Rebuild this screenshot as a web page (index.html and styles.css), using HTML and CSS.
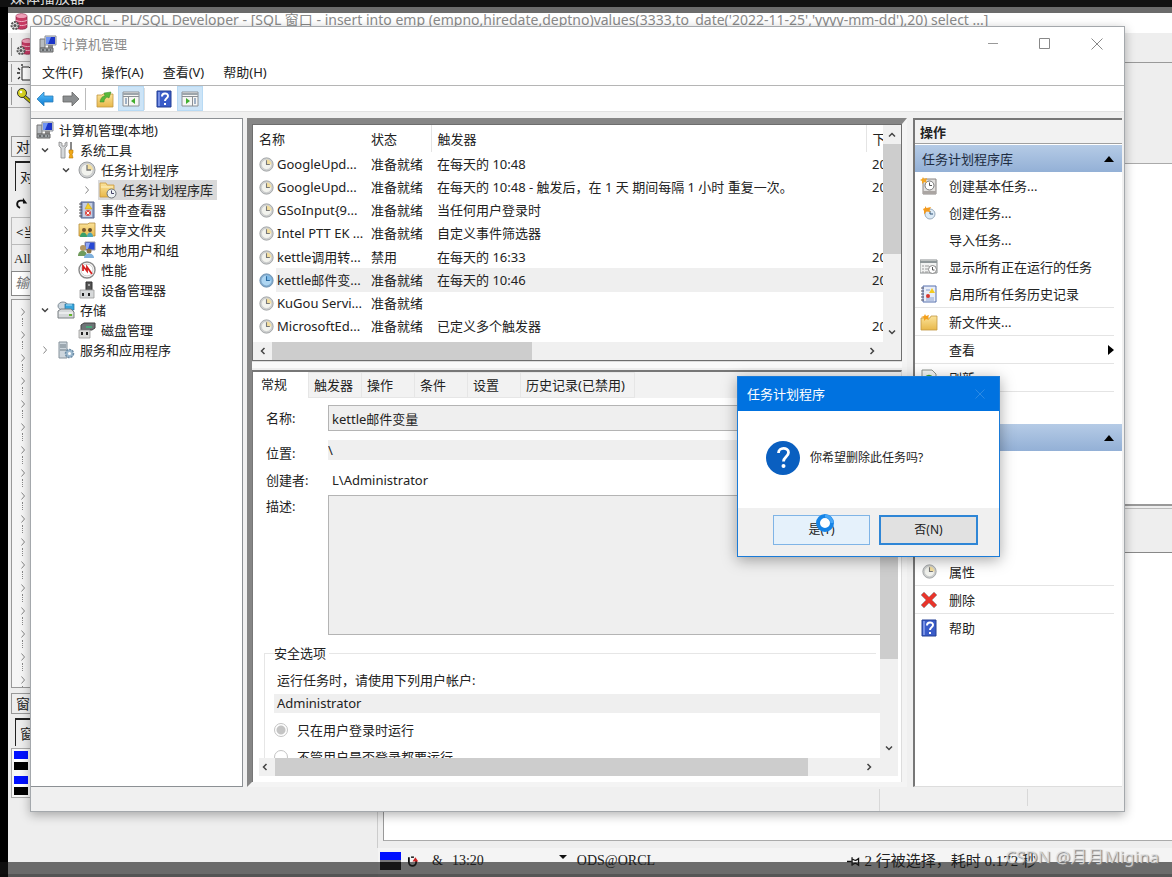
FILE: index.html
```html
<!DOCTYPE html>
<html lang="zh-CN">
<head>
<meta charset="utf-8">
<title>计算机管理</title>
<link rel="stylesheet" href="styles.css">
</head>
<body>
<svg class="defs" aria-hidden="true">
  <defs>
    <linearGradient id="gBlue" x1="0" y1="0" x2="0" y2="1"><stop offset="0" stop-color="#5cc4ff"/><stop offset="1" stop-color="#0a78d0"/></linearGradient>
    <linearGradient id="gGold" x1="0" y1="0" x2="0" y2="1"><stop offset="0" stop-color="#fbe39a"/><stop offset="1" stop-color="#e8b84a"/></linearGradient>
    <symbol id="i-pc" viewBox="0 0 18 18"><path d="M1 4h5v9H1z" fill="#b8bcc0" stroke="#777"/><path d="M6 1h11v9H6z" fill="#d8dce0" stroke="#8a8f98"/><path d="M7 2h9v7H7z" fill="#1b35c8"/><path d="M7 2h5l-3 7H7z" fill="#6f93f4"/><path d="M9 10h5v3H9z" fill="#888"/><path d="M1 13h13v4H1z" fill="#9aa0a4" stroke="#666"/><path d="M3 15h2m2 0h2m2 0h1" stroke="#333"/></symbol>
    <symbol id="i-tools" viewBox="0 0 18 18"><path d="M2 1v4l2 2v10h4V7l2-2V1L8 2v3H5V2z" fill="#d5d8da" stroke="#888" stroke-width=".8"/><path d="M13 1h2v8h-2z" fill="#888"/><path d="M12 9h4v3l-1 1 1 4h-4l1-4-1-1z" fill="#f0a818" stroke="#b87808" stroke-width=".6"/></symbol>
    <symbol id="i-clock" viewBox="0 0 18 18"><circle cx="9" cy="9" r="8" fill="#cfd1d2" stroke="#9a9d9f"/><circle cx="9" cy="9" r="6" fill="#f2f3ee" stroke="#bbb" stroke-width=".5"/><path d="M9 3a6 6 0 0 1 6 6H9z" fill="#f3dfa0"/><path d="M9 4v5h4" fill="none" stroke="#777" stroke-width="1.300"/></symbol>
    <symbol id="i-clockblue" viewBox="0 0 18 18"><circle cx="9" cy="9" r="8" fill="#7fa9cc" stroke="#6d90b0"/><circle cx="9" cy="9" r="6" fill="#aed6f2"/><path d="M9 3a6 6 0 0 1 6 6H9z" fill="#7fbbe8"/><path d="M9 4v5h4" fill="none" stroke="#2a6aa0" stroke-width="1.300"/></symbol>
    <symbol id="i-foldclock" viewBox="0 0 18 18"><path d="M1 2h6l1 2h7v12H1z" fill="url(#gGold)" stroke="#c9983a" stroke-width=".8"/><path d="M2 6h12" stroke="#fff3c4"/><circle cx="12.500" cy="12.500" r="4.500" fill="#eef2f4" stroke="#6b7277"/><path d="M12.500 9.500v3h2.500" fill="none" stroke="#446"/></symbol>
    <symbol id="i-event" viewBox="0 0 18 18"><path d="M3 1h13v16H3z" fill="#8f9fc4" stroke="#54658f"/><path d="M5 2h9v14H5z" fill="#c5cee2"/><path d="M1 3h3m-3 3h3m-3 3h3m-3 3h3m-3 3h3" stroke="#555"/><path d="M10 2l4 6H7z" fill="#f4cf2a" stroke="#c69a10" stroke-width=".5"/><circle cx="10" cy="12" r="3" fill="#dd4a44"/><path d="M8.500 10.500l3 3m0-3l-3 3" stroke="#fff"/></symbol>
    <symbol id="i-share" viewBox="0 0 18 18"><path d="M1 3h9l1-1h6v13H1z" fill="url(#gGold)" stroke="#b48b35" stroke-width=".8"/><circle cx="6" cy="9" r="2" fill="#7a5a30"/><circle cx="12" cy="9" r="2" fill="#5f4a2c"/><path d="M2 16c0-6 7-6 7 0z" fill="#38a06c"/><path d="M9 16c0-6 6-6 6 0z" fill="#4ba7b8"/></symbol>
    <symbol id="i-users" viewBox="0 0 18 18"><path d="M7 1h10v8H7z" fill="#2748d4" stroke="#99a"/><path d="M8 2h4l-2 6H8z" fill="#8fa8f6"/><circle cx="5" cy="7" r="3" fill="#b49762"/><path d="M0 15c0-7 9-7 9 0z" fill="#6f9a5c"/><circle cx="11" cy="10" r="2.500" fill="#8d7248"/><path d="M6 17c0-6 10-6 10 0z" fill="#7fb0dc"/></symbol>
    <symbol id="i-perf" viewBox="0 0 18 18"><circle cx="9" cy="9" r="8" fill="#fff" stroke="#888" stroke-width="1.400"/><circle cx="9" cy="9" r="6" fill="none" stroke="#ccc"/><path d="M5 10V5l4 5V6l5 7" fill="none" stroke="#d42020" stroke-width="1.800"/></symbol>
    <symbol id="i-device" viewBox="0 0 18 18"><path d="M8 1h6v9H8z" fill="#555" stroke="#333"/><path d="M10 3h2v2h-2z" fill="#aaa"/><path d="M2 9h14v8H2z" fill="#d7d9da" stroke="#999" stroke-width=".8"/><path d="M5 12v3m6-3v3" stroke="#222" stroke-width="2"/></symbol>
    <symbol id="i-storage" viewBox="0 0 18 18"><ellipse cx="6" cy="5" rx="5" ry="4" fill="#ccd6de" stroke="#7d8a94"/><path d="M8 3h9v6H8z" fill="#36a5dc" stroke="#26709c" stroke-width=".7"/><path d="M9 4h6" stroke="#b5e4fa"/><path d="M1 10l3-2h10l3 3v6H1z" fill="#d5d8da" stroke="#7b8084"/><path d="M2 12h14" stroke="#fff"/><path d="M12 14h3" stroke="#63b52c" stroke-width="2"/></symbol>
    <symbol id="i-disk" viewBox="0 0 18 18"><path d="M3 4l3-2h11v5l-3 2H3z" fill="#6e7477" stroke="#444"/><path d="M8 6h6" stroke="#3cb878" stroke-width="1.500"/><path d="M1 9h11v8H1z" fill="#dcdcda" stroke="#999" stroke-width=".8"/><path d="M4 11v3m5-3v3" stroke="#222" stroke-width="2"/></symbol>
    <symbol id="i-server" viewBox="0 0 18 18"><path d="M2 1h8v16H2z" fill="#cdd6dd" stroke="#87939c"/><path d="M3 4h6M3 6h6M3 9h6" stroke="#6d7a84"/><circle cx="12.500" cy="12.500" r="4" fill="#9cb9cf" stroke="#6d8ca6" stroke-width="1.500" stroke-dasharray="2 1"/><circle cx="12.500" cy="12.500" r="1.500" fill="#fff"/></symbol>
    <symbol id="i-back" viewBox="0 0 18 18"><path d="M1 9l7-7v4h9v6H8v4z" fill="url(#gBlue)" stroke="#2f7fb8" stroke-width=".8"/></symbol>
    <symbol id="i-fwd" viewBox="0 0 18 18"><path d="M17 9l-7-7v4H1v6h9v4z" fill="#8c8f91" stroke="#666" stroke-width=".8"/></symbol>
    <symbol id="i-up" viewBox="0 0 18 18"><path d="M1 5h5l1-1h10v13H1z" fill="url(#gGold)" stroke="#c29743" stroke-width=".8"/><path d="M4 12c1-5 3-6 5-6L8 3l7-1-2 6-2-1c-2 1-3 3-3 5z" fill="#58b83a" stroke="#3b8a26" stroke-width=".5"/></symbol>
    <symbol id="i-paneL" viewBox="0 0 18 18"><path d="M1 2h16v14H1z" fill="#f5f5f3" stroke="#8b9096"/><path d="M1 3h16v2H1z" fill="#9da5ab"/><path d="M1 6.500h16M6.500 7v9" stroke="#8b9096"/><path d="M3 9h2m-2 2h2m-2 2h2" stroke="#4a6c98"/><path d="M13 8v6l-4-3z" fill="#3fae2e"/></symbol>
    <symbol id="i-paneR" viewBox="0 0 18 18"><path d="M1 2h16v14H1z" fill="#f5f5f3" stroke="#8b9096"/><path d="M1 3h16v2H1z" fill="#9da5ab"/><path d="M1 6.500h16M11.500 7v9" stroke="#8b9096"/><path d="M13 9h2m-2 2h2m-2 2h2" stroke="#4a6c98"/><path d="M5 8v6l4-3z" fill="#3fae2e"/></symbol>
    <symbol id="i-help" viewBox="0 0 18 18"><path d="M2 1h14v16H2z" fill="#3a5cc8" stroke="#233f94"/><path d="M3 2h2v14H3z" fill="#7690e4"/><path d="M7 6.500c0-4 6-4 6-.5 0 2.500-3 2-3 5" fill="none" stroke="#fff" stroke-width="2"/><path d="M9 13h2v2H9z" fill="#fff"/></symbol>
    <symbol id="i-newbasic" viewBox="0 0 18 18"><path d="M3 2h13v15H3z" fill="#e2e0de" stroke="#8a8583"/><path d="M3 14h13v3H3z" fill="#aaa5a2"/><circle cx="9.500" cy="8.500" r="4.500" fill="#fff" stroke="#777"/><path d="M9.500 5.500v3h2.500" fill="none" stroke="#555"/><path d="M3 0l1 2 3-1-1 3 1 2-3-1-2 2V4L0 3l2-1z" fill="#f5a623"/></symbol>
    <symbol id="i-newtask" viewBox="0 0 18 18"><circle cx="10" cy="10" r="5" fill="#dceaf6" stroke="#9ab"/><path d="M10 7v3h3" fill="none" stroke="#357"/><path d="M5 2l1.500 2L11 3 9.500 6l1 2-4-.5-2.500 3V7L3 5l2-1z" fill="#f39a1e"/></symbol>
    <symbol id="i-running" viewBox="0 0 18 18"><path d="M0 2h17v13H0z" fill="#f1f2f1" stroke="#8a8f90"/><path d="M0 3h17v2H0z" fill="#8f9799"/><path d="M2 8h2m1 0h4m-7 3h2m1 0h3m-6 3h2m1 0h3" stroke="#999"/><circle cx="12.500" cy="11.500" r="4" fill="#fff" stroke="#888"/><path d="M12.500 9v3h2" fill="none" stroke="#555"/></symbol>
    <symbol id="i-history" viewBox="0 0 18 18"><path d="M3 1h13v16H3z" fill="#e8edf8" stroke="#5671ae"/><path d="M1 3h3m-3 3h3m-3 3h3m-3 3h3m-3 3h3" stroke="#556"/><path d="M6 5h4m-4 8h8m-8 2h8" stroke="#8aa0d0"/><path d="M12 3l3 5H9z" fill="#f3cb20"/><circle cx="8" cy="11" r="2" fill="#d8362e"/></symbol>
    <symbol id="i-newfold" viewBox="0 0 18 18"><path d="M1 5h9l1-2h6v14H1z" fill="url(#gGold)" stroke="#c29743" stroke-width=".8"/><path d="M5 1l1 2 3-1-1 3 1 2-3-1-2 2V5L1 4l3-1z" fill="#f5a01a"/></symbol>
    <symbol id="i-refresh" viewBox="0 0 18 18"><path d="M2 1h10l4 4v12H2z" fill="#f3f5f3" stroke="#8c928c"/><path d="M5 11a4 4 0 1 1 4 4" fill="none" stroke="#3fa535" stroke-width="2.500"/></symbol>
    <symbol id="i-delete" viewBox="0 0 18 18"><path d="M4 1l5 5 5-5 3 3-5 5 5 5-3 3-5-5-5 5-3-3 5-5-5-5z" fill="#e8352c" stroke="#a9a0a0" stroke-width=".8"/></symbol>
    <symbol id="i-db" viewBox="0 0 18 18"><path d="M6 3c0-3 11-3 11 0v11c0 3-11 3-11 0z" fill="#c83a64" stroke="#7e2440" stroke-width=".7"/><ellipse cx="11.500" cy="3" rx="5.500" ry="2" fill="#eda0b8"/><path d="M6 7c2 2 9 2 11 0M6 11c2 2 9 2 11 0" fill="none" stroke="#f0b4c6"/><circle cx="5" cy="12.500" r="3.500" fill="#ddd" stroke="#555" stroke-width="2" stroke-dasharray="2 1"/><circle cx="5" cy="12.500" r="1.500" fill="#555"/></symbol>
    <symbol id="i-new" viewBox="0 0 18 18"><path d="M6 3h7l4 4v9H6z" fill="#fff" stroke="#222"/><path d="M1 9h3M2 4l2 2M6 0v2M2 15l2-2" stroke="#222" stroke-width="1.300"/></symbol>
    <symbol id="i-key" viewBox="0 0 18 18"><path d="M9 8l8 7-2 2-8-7z" fill="#c8c400" stroke="#333"/><circle cx="6" cy="6" r="4.500" fill="#d8d422" stroke="#333"/><circle cx="5" cy="5" r="1.300" fill="#fff"/></symbol>
    <symbol id="i-redo" viewBox="0 0 18 18"><path d="M7 15C1 13 2 5 8 5h4" fill="none" stroke="#111" stroke-width="2.500"/><path d="M11 1v8h6z" fill="#111"/></symbol>
    <symbol id="i-spin" viewBox="0 0 18 18"><path d="M4 3v7a5 5 0 0 0 10 0V8" fill="none" stroke="#111" stroke-width="2.500"/><path d="M7 3h4" stroke="#111" stroke-width="2"/><path d="M9 9h8l-4-6z" fill="#c22"/></symbol>
    <symbol id="i-pin" viewBox="0 0 18 18"><path d="M0 9h6M7 3v12M8 6c3 2 4 2 8-1v9c-4-3-5-3-8-1" fill="none" stroke="#111" stroke-width="1.800"/></symbol>
    <symbol id="c-left" viewBox="0 0 10 10"><path d="M6.500 2l-3 3 3 3" fill="none" stroke="#444" stroke-width="1.500"/></symbol>
    <symbol id="c-right" viewBox="0 0 10 10"><path d="M3.500 2l3 3-3 3" fill="none" stroke="#444" stroke-width="1.500"/></symbol>
    <symbol id="c-up" viewBox="0 0 10 10"><path d="M2 6.500l3-3 3 3" fill="none" stroke="#444" stroke-width="1.500"/></symbol>
    <symbol id="c-down" viewBox="0 0 10 10"><path d="M2 3.500l3 3 3-3" fill="none" stroke="#444" stroke-width="1.500"/></symbol>
    <symbol id="c-next" viewBox="0 0 10 10"><path d="M3.500 1.500l3 3.500-3 3.500" fill="none" stroke="#888"/></symbol>
  </defs>
</svg>

<div class="screen">
  <div class="player-bar">媒体播放器</div>
  <div class="player-edge"></div>

  <section class="dev">
    <header class="dev-title"><svg class="ico"><use href="#i-db"/></svg><span>ODS@ORCL - PL/SQL Developer - [SQL 窗口 - insert into emp (empno,hiredate,deptno)values(3333,to_date('2022-11-25','yyyy-mm-dd'),20) select ...]</span></header>
    <div class="dev-body">
      <aside class="dev-left">
        <div class="dev-tool tall"><svg class="ico"><use href="#i-db"/></svg></div>
        <div class="dev-tool"><svg class="ico"><use href="#i-new"/></svg></div>
        <div class="dev-tool"><svg class="ico"><use href="#i-key"/></svg></div>
        <div class="dev-tab first">对</div>
        <div class="dev-tab open">对</div>
        <div class="dev-redo"><svg class="ico small"><use href="#i-redo"/></svg></div>
        <div class="dev-pick">&lt;当</div>
        <div class="dev-pick serif">All</div>
        <div class="dev-filter">输</div>
        <ul class="dev-tree">
          <li><svg><use href="#c-next"/></svg></li><li><svg><use href="#c-next"/></svg></li><li><svg><use href="#c-next"/></svg></li><li><svg><use href="#c-next"/></svg></li><li><svg><use href="#c-next"/></svg></li><li><svg><use href="#c-next"/></svg></li><li><svg><use href="#c-next"/></svg></li><li><svg><use href="#c-next"/></svg></li><li><svg><use href="#c-next"/></svg></li><li><svg><use href="#c-next"/></svg></li><li><svg><use href="#c-next"/></svg></li><li><svg><use href="#c-next"/></svg></li><li><svg><use href="#c-next"/></svg></li><li><svg><use href="#c-next"/></svg></li><li><svg><use href="#c-next"/></svg></li><li><svg><use href="#c-next"/></svg></li><li><svg><use href="#c-next"/></svg></li>
        </ul>
        <div class="dev-tab">窗</div>
        <div class="dev-tab open low">窗</div>
        <div class="dev-flags"><i class="flag"></i><i class="flag"></i></div>
      </aside>
      <main class="dev-main">
        <div class="dev-strip"></div>
        <div class="dev-gap"></div>
        <div class="dev-editor"></div>
        <div class="dev-split"></div>
        <div class="dev-grid"></div>
      </main>
    </div>
    <footer class="dev-status">
      <i class="flag wide"></i>
      <svg class="ico small"><use href="#i-spin"/></svg>
      <span class="amp">&amp;</span>
      <span class="time">13:20</span>
      <i class="arrow"></i>
      <span class="conn">ODS@ORCL</span>
      <svg class="ico small"><use href="#i-pin"/></svg>
      <span class="result">2 行被选择，耗时 0.172 秒</span>
    </footer>
  </section>
  <div class="player-shade"></div>

  <section class="win">
    <header class="win-title">
      <svg class="ico"><use href="#i-pc"/></svg>
      <h1>计算机管理</h1>
      <button aria-label="最小化"><svg viewBox="0 0 12 12"><path d="M1 5.500h10" stroke="#999"/></svg></button>
      <button aria-label="最大化"><svg viewBox="0 0 12 12"><path d="M.5.5h10v10H.5z" fill="none" stroke="#888"/></svg></button>
      <button aria-label="关闭"><svg viewBox="0 0 12 12"><path d="M.5.5l11 11m0-11l-11 11" stroke="#888"/></svg></button>
    </header>
    <nav class="menu"><button>文件(F)</button><button>操作(A)</button><button>查看(V)</button><button>帮助(H)</button></nav>
    <div class="tools">
      <button aria-label="后退"><svg class="ico"><use href="#i-back"/></svg></button>
      <button aria-label="前进"><svg class="ico"><use href="#i-fwd"/></svg></button>
      <i class="bar"></i>
      <button aria-label="向上"><svg class="ico"><use href="#i-up"/></svg></button>
      <button class="on" aria-label="显示控制台树"><svg class="ico"><use href="#i-paneL"/></svg></button>
      <i class="bar tight"></i>
      <button aria-label="帮助"><svg class="ico"><use href="#i-help"/></svg></button>
      <button class="on" aria-label="显示操作窗格"><svg class="ico"><use href="#i-paneR"/></svg></button>
    </div>

    <div class="panes">
      <ul class="tree">
        <li class="l0"><span class="node"><svg class="ico"><use href="#i-pc"/></svg>计算机管理(本地)</span></li>
        <li class="l1"><svg class="tw"><use href="#c-down"/></svg><span class="node"><svg class="ico"><use href="#i-tools"/></svg>系统工具</span></li>
        <li class="l2"><svg class="tw"><use href="#c-down"/></svg><span class="node"><svg class="ico"><use href="#i-clock"/></svg>任务计划程序</span></li>
        <li class="l3"><svg class="tw"><use href="#c-next"/></svg><span class="node sel"><svg class="ico"><use href="#i-foldclock"/></svg>任务计划程序库</span></li>
        <li class="l2"><svg class="tw"><use href="#c-next"/></svg><span class="node"><svg class="ico"><use href="#i-event"/></svg>事件查看器</span></li>
        <li class="l2"><svg class="tw"><use href="#c-next"/></svg><span class="node"><svg class="ico"><use href="#i-share"/></svg>共享文件夹</span></li>
        <li class="l2"><svg class="tw"><use href="#c-next"/></svg><span class="node"><svg class="ico"><use href="#i-users"/></svg>本地用户和组</span></li>
        <li class="l2"><svg class="tw"><use href="#c-next"/></svg><span class="node"><svg class="ico"><use href="#i-perf"/></svg>性能</span></li>
        <li class="l2"><i class="tw"></i><span class="node"><svg class="ico"><use href="#i-device"/></svg>设备管理器</span></li>
        <li class="l1"><svg class="tw"><use href="#c-down"/></svg><span class="node"><svg class="ico"><use href="#i-storage"/></svg>存储</span></li>
        <li class="l2"><i class="tw"></i><span class="node"><svg class="ico"><use href="#i-disk"/></svg>磁盘管理</span></li>
        <li class="l1"><svg class="tw"><use href="#c-next"/></svg><span class="node"><svg class="ico"><use href="#i-server"/></svg>服务和应用程序</span></li>
      </ul>

      <div class="center">
        <div class="list">
          <div class="list-view">
            <table>
              <thead><tr><th class="c-name">名称</th><th class="c-state">状态</th><th class="c-trig">触发器</th><th class="c-next">下</th></tr></thead>
              <tbody>
                <tr><td><svg class="ico mid"><use href="#i-clock"/></svg>GoogleUpd...</td><td>准备就绪</td><td>在每天的 10:48</td><td>20</td></tr>
                <tr><td><svg class="ico mid"><use href="#i-clock"/></svg>GoogleUpd...</td><td>准备就绪</td><td>在每天的 10:48 - 触发后，在 1 天 期间每隔 1 小时 重复一次。</td><td>20</td></tr>
                <tr><td><svg class="ico mid"><use href="#i-clock"/></svg>GSoInput{9...</td><td>准备就绪</td><td>当任何用户登录时</td><td></td></tr>
                <tr><td><svg class="ico mid"><use href="#i-clock"/></svg>Intel PTT EK ...</td><td>准备就绪</td><td>自定义事件筛选器</td><td></td></tr>
                <tr><td><svg class="ico mid"><use href="#i-clock"/></svg>kettle调用转...</td><td>禁用</td><td>在每天的 16:33</td><td>20</td></tr>
                <tr class="sel"><td><svg class="ico mid"><use href="#i-clockblue"/></svg>kettle邮件变...</td><td>准备就绪</td><td>在每天的 10:46</td><td>20</td></tr>
                <tr><td><svg class="ico mid"><use href="#i-clock"/></svg>KuGou Servi...</td><td>准备就绪</td><td></td><td></td></tr>
                <tr><td><svg class="ico mid"><use href="#i-clock"/></svg>MicrosoftEd...</td><td>准备就绪</td><td>已定义多个触发器</td><td>20</td></tr>
              </tbody>
            </table>
          </div>
          <div class="vbar"><svg><use href="#c-up"/></svg><i class="thumb"></i><svg><use href="#c-down"/></svg></div>
          <div class="hbar"><svg><use href="#c-left"/></svg><i class="thumb"></i><svg><use href="#c-right"/></svg></div>
        </div>
        <div class="splitter"></div>
        <div class="detail">
          <div class="tabs"><button class="cur">常规</button><button>触发器</button><button>操作</button><button>条件</button><button>设置</button><button>历史记录(已禁用)</button></div>
          <div class="detail-body">
            <div class="form">
              <label for="f-name">名称:</label><input id="f-name" class="boxed" value="kettle邮件变量" readonly>
              <label for="f-loc">位置:</label><input id="f-loc" class="plain" value="\" readonly>
              <span>创建者:</span><span class="creator">L\Administrator</span>
              <label class="top" for="f-desc">描述:</label><textarea id="f-desc" readonly></textarea>
              <fieldset>
                <legend>安全选项</legend>
                <p>运行任务时，请使用下列用户帐户:</p>
                <div class="account">Administrator</div>
                <label class="opt"><input type="radio" name="run" checked disabled>只在用户登录时运行</label>
                <label class="opt"><input type="radio" name="run" disabled>不管用户是否登录都要运行</label>
              </fieldset>
            </div>
            <div class="vbar"><i class="thumb"></i><svg><use href="#c-down"/></svg></div>
            <div class="hbar"><svg><use href="#c-left"/></svg><i class="thumb"></i><svg><use href="#c-right"/></svg></div>
          </div>
        </div>
      </div>

      <aside class="actions">
        <h2>操作</h2>
        <div class="band"><span>任务计划程序库</span><i class="tri"></i></div>
        <button><svg class="ico"><use href="#i-newbasic"/></svg>创建基本任务...</button>
        <button><svg class="ico"><use href="#i-newtask"/></svg>创建任务...</button>
        <button><i class="ico"></i>导入任务...</button>
        <button><svg class="ico"><use href="#i-running"/></svg>显示所有正在运行的任务</button>
        <button class="end"><svg class="ico"><use href="#i-history"/></svg>启用所有任务历史记录</button>
        <button class="end"><svg class="ico"><use href="#i-newfold"/></svg>新文件夹...</button>
        <button class="end"><i class="ico"></i>查看<i class="side"></i></button>
        <button class="end"><svg class="ico"><use href="#i-refresh"/></svg>刷新</button>
        <div class="band second"><i class="tri"></i></div>
        <button class="end"><svg class="ico mid"><use href="#i-clock"/></svg>属性</button>
        <button class="end"><svg class="ico"><use href="#i-delete"/></svg>删除</button>
        <button><svg class="ico"><use href="#i-help"/></svg>帮助</button>
      </aside>
    </div>
    <footer class="win-status"><i></i><i></i></footer>
  </section>

  <section class="dialog" role="dialog" aria-labelledby="dlg-title">
    <header><h2 id="dlg-title">任务计划程序</h2><button aria-label="关闭"><svg viewBox="0 0 10 10"><path d="M.5.5l9 9m0-9l-9 9" stroke="#2c8ae4"/></svg></button></header>
    <div class="ask">
      <svg class="q" viewBox="0 0 34 34"><circle cx="17" cy="17" r="17" fill="#0a5fc0"/><path d="M12.500 12c0-6 10-6 10-.500 0 4-5 4.500-5 9" fill="none" stroke="#fff" stroke-width="2.800"/><circle cx="17.500" cy="25" r="2" fill="#fff"/></svg>
      <p>你希望删除此任务吗?</p>
    </div>
    <footer>
      <button class="yes">是(Y)<svg class="busy" viewBox="0 0 20 20"><circle cx="10" cy="10" r="7" fill="#fff" stroke="#1583e6" stroke-width="4"/><path d="M10 3a7 7 0 0 1 7 7" fill="none" stroke="#45a5f6" stroke-width="3"/></svg></button>
      <button class="no">否(N)</button>
    </footer>
  </section>

  <div class="mark">CSDN @月月Migina</div>
</div>
</body>
</html>
```
FILE: styles.css
```css
* { box-sizing: border-box; }
body, h1, h2, p, ul { margin: 0; padding: 0; }
ul { list-style: none; }
body {
  font-family: "Noto Sans", "Noto Sans CJK SC", sans-serif;
  font-size: 13px;
  line-height: 20px;
  color: #222;
}
button, input, textarea { font: inherit; color: inherit; }
button { background: none; border: 0; padding: 0; }
svg { display: block; flex: none; }
.defs { position: absolute; width: 0; height: 0; }
.ico { width: 18px; height: 18px; flex: none; }
.ico.mid { width: 15px; height: 15px; }
.ico.small { width: 13px; height: 13px; }

.screen {
  position: relative;
  display: flex;
  flex-direction: column;
  height: 100vh;
  overflow: hidden;
  background: #000;
}
.player-bar {
  display: flex;
  align-items: flex-end;
  height: 7px;
  padding-left: 10px;
  overflow: hidden;
  background: #111;
  color: #ddd;
  font-size: 15px;
}
.player-edge { height: 6px; margin-left: 8px; background: #6b6b6b; }
.player-shade {
  position: absolute;
  inset: auto 0 0 0;
  height: 15px;
  background: rgba(24, 24, 24, 0.62);
  border-bottom: 3px solid rgba(0, 0, 0, 0.2);
}

/* background application */
.dev {
  flex: 1;
  display: flex;
  flex-direction: column;
  min-height: 0;
  margin-left: 8px;
  background: #eee;
}
.dev-title {
  display: flex;
  align-items: flex-start;
  gap: 4px;
  height: 20px;
  padding-left: 2px;
  background: #fff;
  color: #8a8a8a;
  font-size: 14px;
  line-height: 14px;
  white-space: nowrap;
}
.dev-body { flex: 1; display: flex; min-height: 0; }
.dev-left { width: 370px; border-right: 1px solid #ccc; }
.dev-tool {
  display: flex;
  align-items: center;
  height: 23px;
  padding-left: 8px;
  border-bottom: 1px solid #aaa;
}
.dev-tool::before { content: ""; width: 1px; height: 18px; margin-left: -5px; margin-right: 4px; background: #999; }
.dev-tool.tall { height: 29px; }
.dev-tab {
  height: 21px;
  margin: 5px 0 0 3px;
  padding-left: 4px;
  border: 1px solid #999;
  font-size: 14px;
  line-height: 20px;
}
.dev-tab.first { margin-top: 28px; }
.dev-tab.open { height: 30px; margin: 4px 0 0 7px; border-color: #222; border-width: 2px 0 0 1px; line-height: 28px; }
.dev-tab.low { height: 28px; }
.dev-redo { height: 26px; padding: 6px 0 0 7px; }
.dev-pick { height: 27px; margin-left: 3px; padding-left: 4px; border: 1px solid #bbb; border-bottom: 0; line-height: 28px; }
.dev-pick.serif { padding-left: 2px; font-family: "Liberation Serif", serif; }
.dev-filter { height: 25px; margin-left: 3px; padding-left: 3px; background: #fff; border: 1px solid #888; color: #777; font-style: italic; font-size: 14px; line-height: 22px; }
.dev-tree { height: 389px; margin: 3px 0 0 3px; padding-top: 1px; border: 1px solid #999; background: #f6f6f6; overflow: hidden; }
.dev-tree li { height: 23px; padding: 6px 0 0 6px; }
.dev-tree svg { width: 10px; height: 10px; }
.dev-tree li::after { content: ""; display: block; height: 8px; margin: 1px 0 0 4px; border-left: 1px dotted #888; }
.dev-flags { display: flex; flex-direction: column; gap: 6px; margin: 2px 0 0 3px; padding: 2px; border: 1px solid #aaa; background: #f8f8f8; }
.flag { display: block; width: 14px; height: 19px; background: linear-gradient(#0010ff 0 8px, #fff 8px 11px, #000 11px); }
.flag.wide { width: 21px; height: 18px; background: linear-gradient(#0010ff 0 8px, #777 8px 10px, #111 10px); }
.dev-main { flex: 1; display: flex; flex-direction: column; min-width: 0; padding-left: 5px; }
.dev-strip { height: 30px; border-bottom: 1px solid #999; }
.dev-gap { height: 101px; border-bottom: 1px solid #aaa; }
.dev-editor { height: 342px; background: #fff; border-left: 1px solid #888; border-bottom: 2px solid #999; }
.dev-split { height: 45px; border-top: 1px solid #bbb; border-bottom: 1px solid #888; margin-top: 2px; }
.dev-grid { flex: 1; background: #fff; border-left: 1px solid #999; border-bottom: 1px solid #aaa; margin-bottom: 7px; }
.dev-status {
  display: flex;
  align-items: center;
  height: 29px;
  padding: 0 135px 3px 372px;
  background: linear-gradient(90deg, #eee 370px, #f4f4f4 370px);
  font-family: "Liberation Serif", "Noto Sans CJK SC", serif;
  font-size: 14px;
  white-space: nowrap;
}
.dev-status > .small { margin-left: 5px; }
.amp { margin-left: 13px; }
.time { margin-left: 9px; }
.arrow { margin: 0 0 8px 75px; border: 4px solid transparent; border-top-color: #111; border-bottom: 0; }
.conn { margin-left: 10px; }
.dev-status .conn + .small { margin-left: auto; }
.result { margin-left: 4px; font-size: 15px; }

/* management window */
.win {
  position: absolute;
  inset: 26px 47px 65px 30px;
  display: flex;
  flex-direction: column;
  border: 1px solid #a4a8ac;
  background: #f0f0f0;
  box-shadow: 0 3px 10px rgba(0, 0, 0, 0.3);
}
.win-title { display: flex; align-items: center; height: 33px; padding: 0 21px 0 8px; background: #fff; }
.win-title h1 { flex: 1; margin-left: 5px; font-size: 13px; font-weight: 400; color: #8a8a8a; }
.win-title button { margin-left: 40px; }
.win-title button svg { width: 12px; height: 12px; }
.menu { display: flex; gap: 19px; height: 26px; padding: 0 0 2px 11px; align-items: center; background: #fff; border-bottom: 1px solid #b5b5b5; }
.tools { display: flex; height: 26px; padding-left: 1px; align-items: center; background: #fff; border-bottom: 1px solid #e2e2e2; }
.tools button { display: grid; place-items: center; width: 26px; height: 25px; }
.tools .on { background: #cce4f7; border: 1px solid #b8daf4; }
.bar { width: 1px; height: 22px; margin: 0 6px 0 1px; background: #bbb; }
.bar.tight { margin: 0 6px 0 0; background: #ddd; }

.panes { flex: 1; display: flex; min-height: 0; padding: 6px 2px 0 0; }
.tree { width: 212px; padding: 1px 0 0 4px; background: #fff; border: 1px solid #8c9094; border-left: 0; }
.tree li { display: flex; align-items: center; height: 20px; white-space: nowrap; }
.l2 { padding-left: 21px; }
.l3 { padding-left: 42px; }
.tw { width: 10px; height: 10px; margin: 0 6px 0 5px; flex: none; }
.node { display: flex; align-items: center; gap: 5px; height: 20px; padding: 0 4px 0 1px; }
.node.sel { background: #d9d9d9; }

.center {
  flex: 1;
  display: flex;
  flex-direction: column;
  min-width: 0;
  margin: 0 6px 0 4px;
  border-style: solid;
  border-width: 6px 5px 5px 5px;
  border-color: #868686 #f4f4f4 #f4f4f4 #868686;
}
.list {
  display: grid;
  grid-template-columns: minmax(0, 1fr) 18px;
  border: 1px solid #6e6e6e;
  background: #fff;
}
.list-view { overflow: hidden; height: 217px; }
table { table-layout: fixed; width: 100%; height: 213px; border-collapse: collapse; }
th, td { padding: 0 0 0 6px; font-weight: 400; text-align: left; white-space: nowrap; overflow: hidden; line-height: 18px; }
th { height: 27px; }
.c-name { width: 112px; }
.c-state { width: 66px; }
.c-next { width: 17px; border-left: 1px solid #e4e4e4; }
.c-trig { border-left: 1px solid #e4e4e4; }
td .ico { display: inline-block; vertical-align: -3px; margin-right: 3px; }
.sel td { background: #efefef; }
.sel td:first-child { background: linear-gradient(90deg, #fff 23px, #efefef 23px); }
.vbar, .hbar { display: flex; align-items: center; background: #f0f0f0; }
.vbar { flex-direction: column; padding: 5px 0; }
.hbar { grid-column: 1 / -1; height: 18px; padding: 0 5px; }
.vbar svg, .hbar svg { width: 10px; height: 10px; }
.thumb { background: #cdcdcd; }
.list .vbar .thumb { width: 18px; height: 110px; margin: 4px 0 auto; }
.list .hbar .thumb { width: 260px; height: 18px; margin: 0 auto 0 4px; }
.list .hbar { padding-right: 24px; }
.splitter { height: 9px; background: #fafafa; border-bottom: 2px solid #eee; border-top: 1px solid #ddd; }

.detail { flex: 1; display: flex; flex-direction: column; min-height: 0; border-top: 2px solid #777; border-left: 1px solid #777; border-right: 1px solid #ddd; background: #fff; }
.tabs { display: flex; height: 26px; background: #f2f2f2; }
.tabs button { width: 53px; padding-left: 5px; text-align: left; border: 1px solid #e6e6e6; border-left: 0; white-space: nowrap; }
.tabs .cur { width: 56px; padding: 0 0 3px 8px; border: 0; border-right: 1px solid #e6e6e6; background: #fff; }
.tabs button:last-child { width: 114px; }
.detail-body { flex: 1; display: grid; grid-template-columns: minmax(0, 1fr) 18px; grid-template-rows: minmax(0, 1fr) 18px; min-height: 0; padding: 0 3px 6px 6px; }
.form { display: grid; grid-template-columns: 69px minmax(0, 1fr); align-content: start; overflow: hidden; padding-top: 7px; }
.form > label, .form > span { padding-left: 7px; line-height: 26px; }
.form input.boxed { height: 26px; margin-bottom: 9px; padding: 0 3px; border: 1px solid #b4b4b4; border-right: 0; background: #efefef; }
.form input.plain { height: 20px; margin-bottom: 7px; padding: 0; border: 0; background: #efefef; }
.form .creator { padding-left: 4px; }
.form textarea { height: 140px; margin-top: 2px; border: 1px solid #b4b4b4; border-right: 0; background: #efefef; resize: none; }
fieldset { grid-column: 1 / -1; min-width: 0; margin: 8px 4px 0 5px; padding: 0 0 0 9px; border: 1px solid #e6e6e6; border-bottom: 0; border-right: 0; }
legend { padding: 0 3px 0 0; }
fieldset p { padding: 7px 0 4px 3px; }
.account { height: 19px; padding-left: 3px; margin-right: -5px; background: #efefef; line-height: 19px; }
.opt { display: flex; align-items: center; gap: 9px; height: 27px; padding-top: 6px; }
.opt input { appearance: none; width: 14px; height: 14px; margin: 0; border: 1px solid #c4c4c4; border-radius: 50%; background: #fff; }
.opt input:checked { background: radial-gradient(circle, #c4c4c4 4px, #fff 5px); }
.detail .vbar .thumb { width: 18px; height: 261px; margin-bottom: auto; }
.detail .vbar { padding-top: 0; }
.detail .hbar .thumb { flex: 0 1 533px; height: 18px; margin-right: auto; margin-left: 5px; }
.detail .hbar { padding: 0 24px 0 1px; }

.actions { width: 209px; display: flex; flex-direction: column; background: #fff; border-top: 2px solid #777; border-left: 2px solid #777; border-bottom: 1px solid #ddd; }
.actions h2 { height: 24px; padding-left: 5px; background: #f2f2f2; border-bottom: 1px solid #a0a0a0; font-size: 13px; font-weight: 700; line-height: 24px; }
.band { display: flex; align-items: center; justify-content: space-between; flex: none; height: 27px; padding: 0 8px 0 7px; margin-top: 1px; background: linear-gradient(#b5cbe6, #93b0d6); color: #1d2b40; }
.band.second { margin: 32px 0 107px; justify-content: flex-end; }
.tri { border: 5px solid transparent; border-top: 0; border-bottom: 6px solid #000; }
.side { margin-left: auto; border: 5px solid transparent; border-right: 0; border-left: 6px solid #000; }
.actions button { display: flex; align-items: center; height: 27px; padding-left: 5px; text-align: left; white-space: nowrap; }
.actions button .ico { margin-right: 11px; }
.actions button .mid { margin: 0 12px 0 2px; }
.actions .end { border-bottom: 1px solid #e4e4e4; height: 28px; margin-right: 8px; }
.win-status { display: flex; justify-content: flex-end; height: 24px; }
.win-status i { width: 148px; margin: 2px 0 0; border-left: 1px solid #d8d8d8; }
.win-status i + i { width: 97px; margin-bottom: 5px; }

/* confirmation dialog */
.dialog {
  position: absolute;
  left: 737px;
  top: 376px;
  width: 263px;
  border: 1px solid #1a7bd8;
  background: #fff;
  box-shadow: 0 3px 14px rgba(0, 0, 0, 0.35);
}
.dialog header { display: flex; align-items: center; justify-content: space-between; height: 34px; padding: 0 14px 0 9px; background: #0072e0; color: #fff; }
.dialog h2 { font-size: 13px; font-weight: 400; }
.dialog header svg { width: 10px; height: 10px; }
.ask { display: flex; align-items: center; gap: 10px; height: 97px; padding: 0 0 3px 28px; font-size: 12px; }
.q { width: 34px; height: 34px; }
.dialog footer { display: flex; gap: 9px; height: 48px; padding: 7px 21px 11px 35px; background: #f0f0f0; font-size: 12px; }
.dialog footer button { position: relative; flex: 1; }
.yes { background: #e5f1fb; border: 1px solid #7fb4e6; }
.no { background: #e1e1e1; border: 2px solid #2f86d6; }
.busy { position: absolute; left: 41px; top: -3px; width: 20px; height: 20px; }

.mark { position: absolute; right: 13px; bottom: 8px; font-size: 17px; line-height: 24px; color: rgba(225, 225, 225, 0.8); text-shadow: 1px 1px 1px #777; }
```
